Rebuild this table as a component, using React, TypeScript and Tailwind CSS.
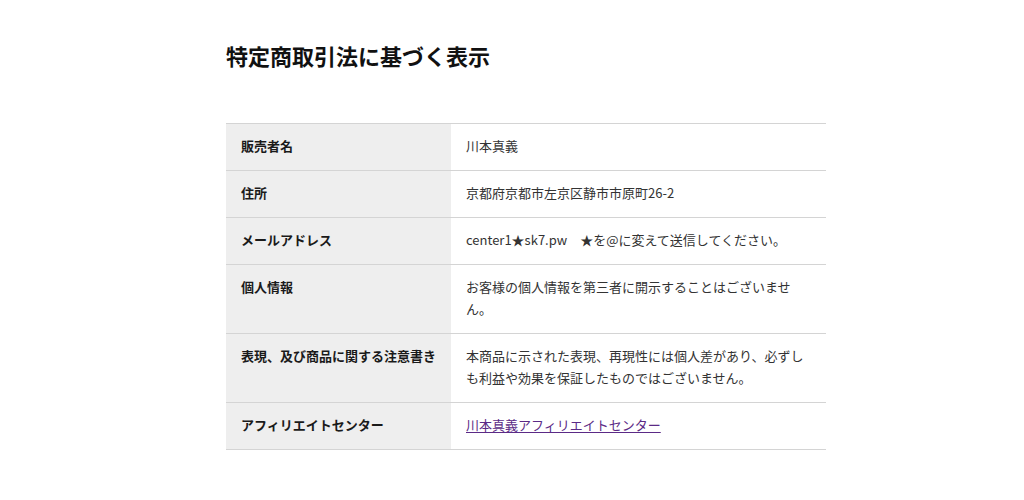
import React from "react";

const rows: { label: string; value: React.ReactNode }[] = [
  { label: "販売者名", value: "川本真義" },
  { label: "住所", value: "京都府京都市左京区静市市原町26-2" },
  { label: "メールアドレス", value: "center1★sk7.pw　★を@に変えて送信してください。" },
  { label: "個人情報", value: "お客様の個人情報を第三者に開示することはございません。" },
  {
    label: "表現、及び商品に関する注意書き",
    value: "本商品に示された表現、再現性には個人差があり、必ずしも利益や効果を保証したものではございません。",
  },
  {
    label: "アフィリエイトセンター",
    value: (
      <a href="#" className="text-[#5b2a86] underline underline-offset-2">
        川本真義アフィリエイトセンター
      </a>
    ),
  },
];

export default function App() {
  return (
    <div className="min-h-[500px] bg-white font-['Noto_Sans_CJK_JP','Noto_Sans',sans-serif] text-[#222]">
      <div className="ml-[226px] w-[600px] pt-[39px]">
        <h1 className="text-[22px] leading-[33px] font-bold text-[#111]">特定商取引法に基づく表示</h1>

        <div className="mt-[51px] border-t border-[#d4d4d4]">
          {rows.map((row) => (
            <div key={row.label} className="flex border-b border-[#d4d4d4] text-[13px] leading-[22px]">
              <div className="w-[225px] shrink-0 bg-[#eeeeee] px-[15px] pt-[11px] pb-[13px] font-bold text-[#1a1a1a]">
                {row.label}
              </div>
              <div className="flex-1 px-[15px] pt-[11px] pb-[13px] text-[#333]">{row.value}</div>
            </div>
          ))}
        </div>
      </div>
    </div>
  );
}
